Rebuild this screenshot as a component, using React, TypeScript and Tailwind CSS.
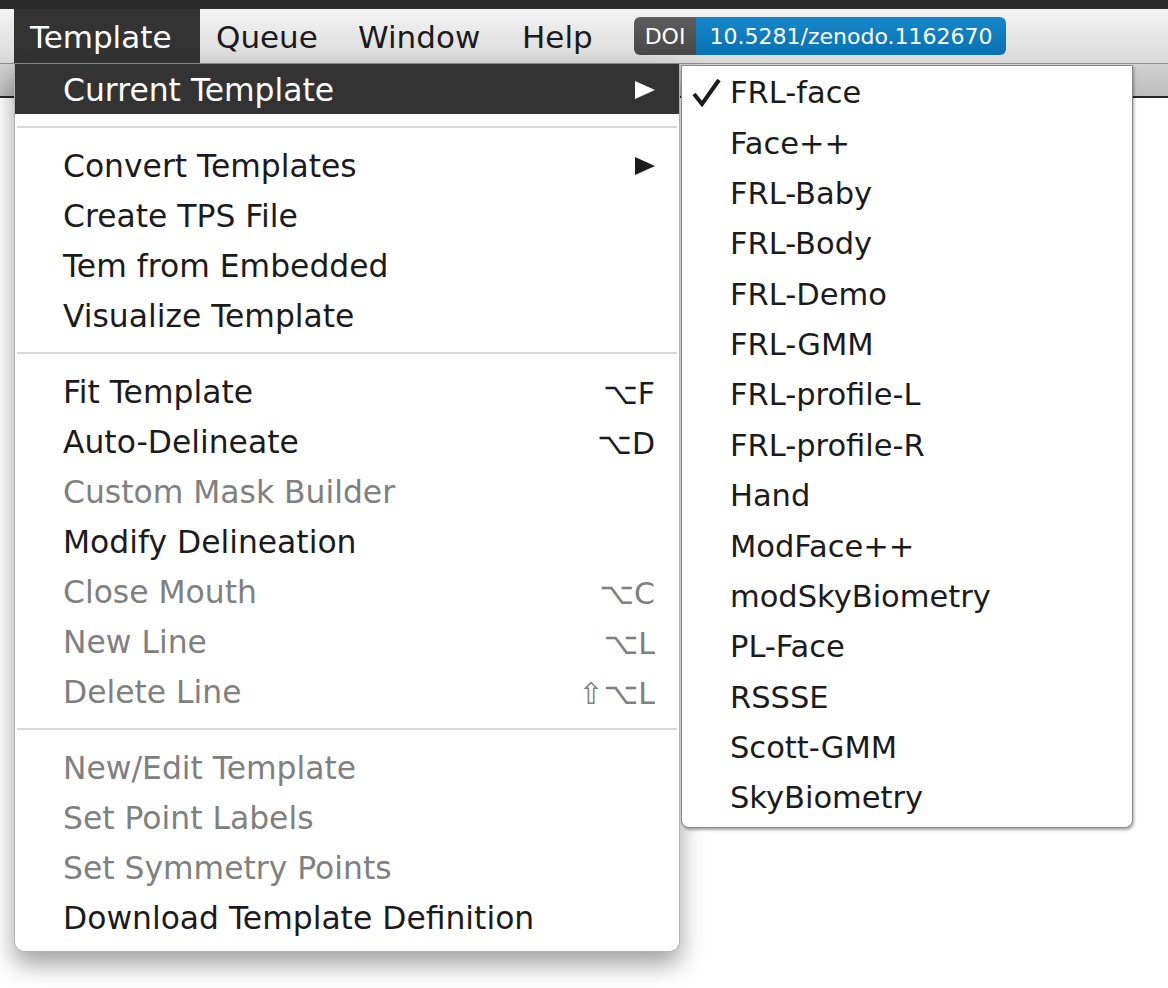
import React from 'react';

type Item =
    | { kind: 'sep' }
    | { kind: 'item'; label: string; disabled?: boolean; shortcut?: string; submenu?: boolean; active?: boolean };

const menuItems: Item[] = [
    { kind: 'item', label: 'Current Template', submenu: true, active: true },
    { kind: 'sep' },
    { kind: 'item', label: 'Convert Templates', submenu: true },
    { kind: 'item', label: 'Create TPS File' },
    { kind: 'item', label: 'Tem from Embedded' },
    { kind: 'item', label: 'Visualize Template' },
    { kind: 'sep' },
    { kind: 'item', label: 'Fit Template', shortcut: '⌥F' },
    { kind: 'item', label: 'Auto-Delineate', shortcut: '⌥D' },
    { kind: 'item', label: 'Custom Mask Builder', disabled: true },
    { kind: 'item', label: 'Modify Delineation' },
    { kind: 'item', label: 'Close Mouth', disabled: true, shortcut: '⌥C' },
    { kind: 'item', label: 'New Line', disabled: true, shortcut: '⌥L' },
    { kind: 'item', label: 'Delete Line', disabled: true, shortcut: '⇧⌥L' },
    { kind: 'sep' },
    { kind: 'item', label: 'New/Edit Template', disabled: true },
    { kind: 'item', label: 'Set Point Labels', disabled: true },
    { kind: 'item', label: 'Set Symmetry Points', disabled: true },
    { kind: 'item', label: 'Download Template Definition' },
];

const templates = [
    'FRL-face',
    'Face++',
    'FRL-Baby',
    'FRL-Body',
    'FRL-Demo',
    'FRL-GMM',
    'FRL-profile-L',
    'FRL-profile-R',
    'Hand',
    'ModFace++',
    'modSkyBiometry',
    'PL-Face',
    'RSSSE',
    'Scott-GMM',
    'SkyBiometry',
];

const Arrow: React.FC<{ color: string }> = ({ color }) => (
    <svg width="20" height="18" viewBox="0 0 20 18" className="-mt-[3px]">
        <polygon points="0,0 20,9 0,18" fill={color} />
    </svg>
);

const App: React.FC = () => {
    return (
        <div className="relative w-[1168px] h-[988px] overflow-hidden bg-white font-['DejaVu_Sans',sans-serif]">
            {/* Window top */}
            <div className="h-[9px] bg-[#2a2a2a]"></div>

            {/* Menu bar */}
            <div className="flex h-[55px] items-stretch border-b border-[#8e8e8e] bg-gradient-to-b from-[#f4f4f4] to-[#d9d9d9] pl-[14px] text-[31px] text-[#1b1b1b]">
                <div className="flex w-[186px] items-center bg-[#333333] pl-[16px] pt-[3px] text-white">Template</div>
                <div className="flex w-[142px] items-center pl-[16px] pt-[3px]">Queue</div>
                <div className="flex w-[164px] items-center pl-[16px] pt-[3px]">Window</div>
                <div className="flex w-[128px] items-center pl-[16px] pt-[3px]">Help</div>
                <div className="flex items-center">
                    <div className="flex h-[38px] overflow-hidden rounded-[6px] text-[22px] text-white">
                        <span className="flex w-[62px] items-center justify-center bg-gradient-to-b from-[#5d5d5d] to-[#474747]">DOI</span>
                        <span className="flex w-[310px] items-center justify-center bg-gradient-to-b from-[#1688cb] to-[#0771b2]">10.5281/zenodo.1162670</span>
                    </div>
                </div>
            </div>

            {/* Toolbar strip behind the menus */}
            <div className="h-[34px] border-b-2 border-[#262626] bg-gradient-to-b from-[#d2d2d2] to-[#bdbdbd]"></div>

            {/* Template menu */}
            <div className="absolute left-[14px] top-[64px] z-10 w-[666px] rounded-b-[10px] border-x border-b border-[#b4b4b4] bg-white pb-[9px] text-[31.4px] shadow-[0_12px_24px_rgba(0,0,0,0.38)]">
                {menuItems.map((item, i) =>
                    item.kind === 'sep' ? (
                        <div key={i} className="flex h-[26px] items-center px-[2px]">
                            <div className="h-[2px] w-full bg-[#d8d8d8]"></div>
                        </div>
                    ) : (
                        <div
                            key={i}
                            className={`flex h-[50px] items-center justify-between pl-[48px] pr-[24px] pt-[4px] ${item.active ? 'bg-[#333333] text-white' : item.disabled ? 'text-[#808080]' : 'text-[#1b1b1b]'}`}
                        >
                            <span>{item.label}</span>
                            {item.submenu && <Arrow color={item.active ? '#ffffff' : '#1b1b1b'} />}
                            {item.shortcut && <span className="text-[30px]">{item.shortcut}</span>}
                        </div>
                    )
                )}
            </div>

            {/* Current Template submenu */}
            <div className="absolute left-[681px] top-[65px] z-20 w-[452px] rounded-b-[8px] border border-[#8a8a8a] bg-white pb-[5px] pt-[1px] text-[30.5px] text-[#1b1b1b] shadow-[1px_2px_3px_rgba(0,0,0,0.35)]">
                {templates.map((name, i) => (
                    <div key={name} className="flex h-[50.36px] items-center pt-[2px]">
                        <span className="flex w-[48px] justify-center">
                            {i === 0 && (
                                <svg width="30" height="30" viewBox="0 0 30 30" className="-mt-[2px]">
                                    <path d="M3 17 L11 27 L28 3" fill="none" stroke="#1b1b1b" strokeWidth="4" strokeLinejoin="miter" />
                                </svg>
                            )}
                        </span>
                        <span>{name}</span>
                    </div>
                ))}
            </div>
        </div>
    );
};

export default App;
